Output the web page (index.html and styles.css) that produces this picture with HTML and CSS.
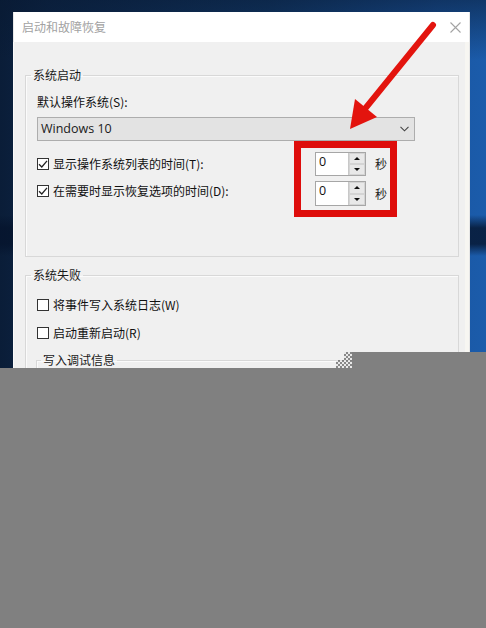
FILE: index.html
```html
<!DOCTYPE html>
<html lang="zh-CN">
<head>
<meta charset="utf-8">
<title>启动和故障恢复</title>
<link rel="stylesheet" href="styles.css">
</head>
<body>
<div class="desktop">
  <div class="window">
    <div class="titlebar">
      <span class="title">启动和故障恢复</span>
      <svg class="close" width="11" height="11" viewBox="0 0 11 11"><path d="M0.5 0.5 L10.5 10.5 M10.5 0.5 L0.5 10.5" stroke="#a3a3a3" stroke-width="1.1" fill="none"/></svg>
    </div>
    <div class="content">
      <fieldset class="group g1">
        <legend>系统启动</legend>
        <div class="field-label">默认操作系统(S):</div>
        <div class="select">
          <span class="select-text">Windows 10</span>
          <svg class="chevron" width="9" height="6" viewBox="0 0 9 6"><path d="M0.5 0.8 L4.5 4.8 L8.5 0.8" stroke="#444" stroke-width="1.1" fill="none"/></svg>
        </div>
        <div class="timer-row r1">
          <label class="check"><span class="box"><svg width="10" height="10" viewBox="0 0 10 10"><path d="M1 5.2 L3.8 8 L9 1.8" stroke="#222" stroke-width="1.3" fill="none"/></svg></span>显示操作系统列表的时间(T):</label>
          <div class="spin"><div class="spin-input">0</div><div class="spin-btns"><span class="btn"><i class="tri up"></i></span><span class="btn"><i class="tri down"></i></span></div></div>
          <span class="unit">秒</span>
        </div>
        <div class="timer-row r2">
          <label class="check"><span class="box"><svg width="10" height="10" viewBox="0 0 10 10"><path d="M1 5.2 L3.8 8 L9 1.8" stroke="#222" stroke-width="1.3" fill="none"/></svg></span>在需要时显示恢复选项的时间(D):</label>
          <div class="spin"><div class="spin-input">0</div><div class="spin-btns"><span class="btn"><i class="tri up"></i></span><span class="btn"><i class="tri down"></i></span></div></div>
          <span class="unit">秒</span>
        </div>
      </fieldset>
      <fieldset class="group g2">
        <legend>系统失败</legend>
        <label class="check plain c1"><span class="box"></span>将事件写入系统日志(W)</label>
        <label class="check plain c2"><span class="box"></span>启动重新启动(R)</label>
        <fieldset class="group sub">
          <legend>写入调试信息</legend>
        </fieldset>
      </fieldset>
    </div>
  </div>
  <div class="highlight-box"></div>
  <svg class="arrow" width="120" height="130" viewBox="330 10 120 130">
    <line x1="433" y1="25" x2="364" y2="110" stroke="#e3140e" stroke-width="6" stroke-linecap="round"/>
    <polygon points="350,129 377,117 355,99" fill="#e3140e"/>
  </svg>
  <div class="dither d1"></div>
  <div class="dither d2"></div>
  <div class="mask mask-a"></div>
  <div class="mask mask-b"></div>
</div>
</body>
</html>
```
FILE: styles.css
```css
html, body {
  margin: 0;
  padding: 0;
}
body {
  width: 486px;
  height: 628px;
  overflow: hidden;
  font-family: "Noto Sans CJK SC", "Noto Sans", sans-serif;
  font-size: 12px;
  color: #111;
}
.desktop {
  position: relative;
  width: 486px;
  height: 628px;
  padding-top: 12px;
  box-sizing: border-box;
  background:
    linear-gradient(180deg, rgba(8,25,50,0.55) 0, rgba(8,25,50,0) 60px, rgba(8,25,50,0) 215px, rgba(5,20,45,0.8) 228px, rgba(5,20,45,0.8) 244px, rgba(8,25,50,0) 256px),
    linear-gradient(90deg, #0a1d38 0, #0d2546 10%, #123a6a 55%, #1a56a2 90%, #1b5cab 100%);
}
.window {
  margin-left: 13px;
  width: 457px;
  background: #f0f0f0;
  border-right: 1px solid #e6e6e6;
  box-sizing: border-box;
  height: 420px;
}
.titlebar {
  height: 30px;
  background: #ffffff;
  display: flex;
  align-items: center;
  justify-content: space-between;
  padding: 0 8px 0 8px;
  border-left: 1px solid #e8e8e8;
}
.title {
  color: #a2a2a2;
  font-size: 12px;
  line-height: 16px;
}
.close {
  display: block;
  margin-top: 0;
  margin-right: 0;
}
.content {
  padding: 25px 10px 0 12px;
  box-shadow: inset 1px 0 0 #fafafa, inset -4px 0 0 #f7f6f2;
}
.group {
  margin: 0;
  padding: 0 11px;
  border: 1px solid #d8d8d8;
  box-shadow: inset 1px 1px 0 #fbfbfb;
  min-width: 0;
}
.group legend {
  padding: 0 2px;
  margin-left: -6px;
  line-height: 16px;
  font-size: 12px;
  color: #1a1a1a;
}
.g1 {
  padding-bottom: 50px;
}
.field-label {
  margin-top: 11px;
  line-height: 16px;
}
.select {
  margin-top: 7px;
  width: 378px;
  height: 24px;
  box-sizing: border-box;
  border: 1px solid #adadad;
  background: #e3e3e3;
  display: flex;
  align-items: center;
  justify-content: space-between;
  padding: 0 5px 0 3px;
}
.select-text {
  font-family: "Open Sans", "Noto Sans", sans-serif;
  font-size: 12.5px;
  color: #1a1a1a;
  line-height: 16px;
}
.chevron {
  display: block;
}
.timer-row {
  display: flex;
  align-items: center;
}
.r1 {
  margin-top: 11px;
  height: 24px;
}
.r2 {
  margin-top: 5px;
  height: 25px;
}
.check {
  display: flex;
  align-items: center;
  gap: 4px;
  line-height: 16px;
  width: 278px;
  color: #111;
}
.r2 .check {
  margin-top: -6px;
}
.box {
  width: 12px;
  height: 12px;
  box-sizing: border-box;
  border: 1px solid #333;
  background: #fff;
  display: flex;
  align-items: center;
  justify-content: center;
  flex: none;
}
.box svg {
  display: block;
}
.spin {
  display: flex;
  width: 51px;
  height: 100%;
  box-sizing: border-box;
  border: 1px solid #a6a6a6;
  background: #fff;
}
.spin-input {
  flex: 1;
  padding-left: 3px;
  font-family: "Open Sans", "Noto Sans", sans-serif;
  font-size: 12.5px;
  line-height: 18px;
  color: #111;
}
.spin-btns {
  width: 16px;
  display: flex;
  flex-direction: column;
  border-left: 1px solid #c8c8c8;
}
.btn {
  flex: 1;
  background: #e8e8e8;
  border: 1px solid #d4d4d4;
  display: flex;
  align-items: center;
  justify-content: center;
}
.tri {
  width: 0;
  height: 0;
  border-left: 3px solid transparent;
  border-right: 3px solid transparent;
}
.tri.up {
  border-bottom: 3px solid #111;
}
.tri.down {
  border-top: 3px solid #111;
}
.unit {
  margin-left: 9px;
  line-height: 16px;
  color: #222;
}
.g2 {
  margin-top: 10px;
  height: 200px;
}
.plain {
  width: auto;
}
.c1 {
  margin-top: 14px;
}
.c2 {
  margin-top: 12px;
}
.sub {
  margin-top: 11px;
  margin-left: -1px;
  width: 300px;
  height: 40px;
  padding: 0 8px;
}
.sub legend {
  margin-left: -4px;
}
.highlight-box {
  position: absolute;
  left: 294px;
  top: 141px;
  width: 103px;
  height: 76px;
  box-sizing: border-box;
  border: 7px solid #de0d0b;
}
.arrow {
  position: absolute;
  left: 330px;
  top: 10px;
}
.dither {
  position: absolute;
  background-color: #e6e6e6;
  background-image: conic-gradient(#444 25%, transparent 0 50%, #444 0 75%, transparent 0);
  background-size: 4px 4px;
  opacity: 0.6;
}
.d1 {
  left: 344px;
  top: 352px;
  width: 8px;
  height: 8px;
}
.d2 {
  left: 336px;
  top: 360px;
  width: 16px;
  height: 8px;
}
.mask {
  position: absolute;
  background: #808080;
}
.mask-a {
  left: 352px;
  top: 352px;
  width: 134px;
  height: 16px;
}
.mask-b {
  left: 0;
  top: 368px;
  width: 486px;
  height: 260px;
}
```
